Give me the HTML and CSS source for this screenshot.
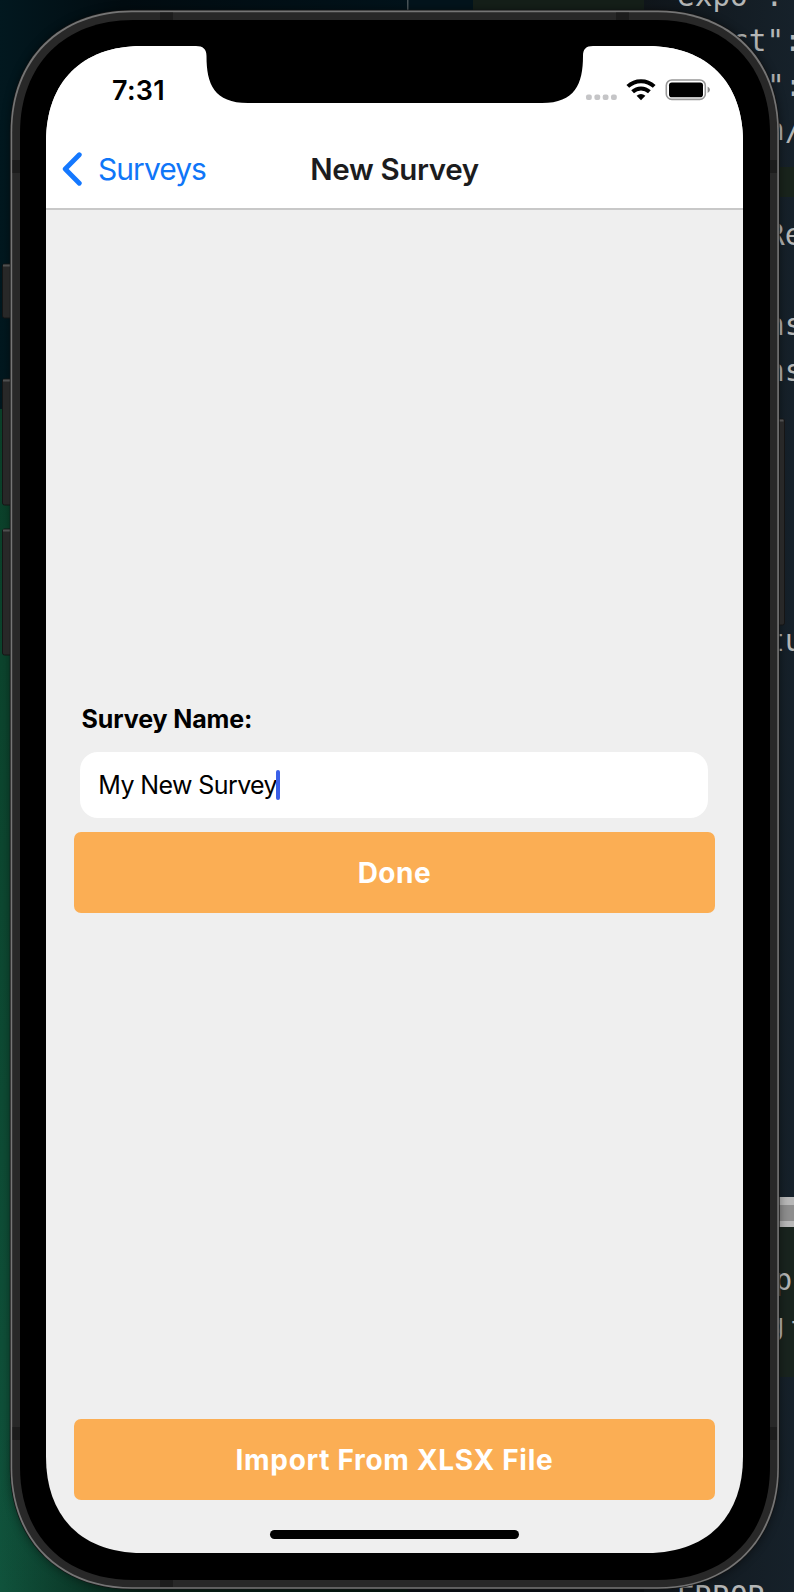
FILE: index.html
```html
<!DOCTYPE html>
<html lang="en">
<head>
<meta charset="utf-8">
<title>New Survey</title>
<link rel="stylesheet" href="styles.css">
</head>
<body>
<div class="desktop">
  <svg class="scene" width="794" height="1592" viewBox="0 0 794 1592" aria-hidden="true">
    <defs>
      <linearGradient id="sky" x1="0" x2="1" y1="0" y2="0"><stop offset="0" stop-color="#02181f"/><stop offset=".3" stop-color="#020c11"/><stop offset="1" stop-color="#02131b"/></linearGradient>
      <linearGradient id="grass" x1="0" x2="0" y1="0" y2="1"><stop offset="0" stop-color="#0b4029"/><stop offset="1" stop-color="#10533c"/></linearGradient>
      <linearGradient id="floor" x1="0" x2="1" y1="0" y2="0"><stop offset="0" stop-color="#04160f" stop-opacity="0"/><stop offset=".35" stop-color="#04160f" stop-opacity=".8"/><stop offset="1" stop-color="#04160f"/></linearGradient>
      <linearGradient id="editor" x1="0" x2="1" y1="0" y2="0"><stop offset="0" stop-color="#10161b"/><stop offset="1" stop-color="#16212a"/></linearGradient>
      <filter id="soft" x="-5%" y="-5%" width="110%" height="110%"><feGaussianBlur stdDeviation="5"/></filter>
    </defs>
    <rect width="410" height="409" fill="url(#sky)"/>
    <rect y="409" width="410" height="1183" fill="url(#grass)"/>
    <rect y="1440" width="410" height="152" fill="url(#floor)"/>
    <rect x="407" width="66" height="409" fill="#03141c"/>
    <rect x="407" width="1.5" height="20" fill="#4a5559"/>
    <rect x="408" y="1580" width="236" height="12" fill="#0a0f14"/>
    <rect x="473" width="171" height="20" fill="#151f19"/>
    <rect x="644" width="150" height="1592" fill="url(#editor)"/>
    <rect x="770" y="167" width="24" height="30" fill="#19241c"/>
    <rect x="770" y="1227" width="24" height="150" fill="#19241e"/>
    <rect x="770" y="1197" width="24" height="30" fill="#b8b8b8"/>
    <rect x="770" y="1205" width="24" height="16" fill="#8e8e8e"/>
    <g class="code">
      <text x="677" y="5.500">expo":</text>
      <text x="731" y="50.500">ct":</text>
      <text x="767" y="95.500">":</text>
      <text x="767" y="140">n/</text>
      <text x="767" y="245">Re</text>
      <text x="767" y="335">ns</text>
      <text x="767" y="380.500">ns</text>
      <text x="767" y="650.500">tu</text>
      <text x="774.500" y="1290">p</text>
      <text x="767" y="1335">g</text>
      <text x="790.500" y="1338">t</text>
      <text x="677" y="1607">ERROR</text>
    </g>
    <path id="shade" fill="#000" opacity=".4" filter="url(#soft)"/>
    <g class="keys">
      <rect x="2.5" y="264" width="14" height="54" rx="2"/>
      <rect x="2.5" y="379" width="14" height="126" rx="2"/>
      <rect x="2.5" y="529" width="14" height="126" rx="2"/>
      <rect x="772" y="419" width="12.500" height="206" rx="2"/>
    </g>
    <path class="key-edges" d="M3 265.500H12M3 380.500H12M3 530.500H12M778 420.500H783.500"/>
    <g id="frame"></g>
  </svg>

  <main class="screen">
    <header class="status">
      <span class="time">7:31</span>
      <svg class="indicators" width="130" height="28" viewBox="0 0 130 28">
        <g fill="#c5c5c7"><rect x="6" y="15.500" width="5.800" height="5.500" rx="2"/><rect x="14.400" y="15.500" width="5.800" height="5.500" rx="2"/><rect x="22.700" y="15.500" width="5.800" height="5.500" rx="2"/><rect x="31" y="15.500" width="5.800" height="5.500" rx="2"/></g>
        <g fill="none" stroke="#000" stroke-width="4"><path d="M47.800 7.400A19.300 19.300 0 0 1 74.200 7.400"/><path d="M52.600 12.700A12.400 12.400 0 0 1 69.400 12.700"/></g>
        <path d="M56.600 16.800Q61 13.300 65.400 16.800L61 21.200Z"/>
        <rect x="86.300" y="1" width="39" height="19.400" rx="5.500" fill="none" stroke="#989898" stroke-width="1.600"/>
        <rect x="89" y="3.400" width="34" height="14.800" rx="2.800"/>
        <path d="M127.600 7.500Q130 8.700 130 10.700T127.600 13.900Z" fill="#8c8c8c"/>
      </svg>
    </header>
    <nav class="nav">
      <a class="back"><svg width="20" height="34" viewBox="0 0 20 34"><path d="M17.300 2.700L3.200 17L17.300 31.300"/></svg><span class="back-label">Surveys</span></a>
      <h1 class="title">New Survey</h1>
    </nav>
    <section class="form">
      <label class="label">Survey Name:</label>
      <div class="field"><span class="value">My New Survey</span><i class="caret"></i></div>
      <button class="button">Done</button>
    </section>
    <footer class="footer">
      <button class="button import">Import From XLSX File</button>
      <div class="home"></div>
    </footer>
  </main>
</div>
<script src="frame.js"></script>
</body>
</html>
```
FILE: styles.css
```css
* { box-sizing: border-box; }
body { margin: 0; background: #02131b; font-family: Inter, "Liberation Sans", sans-serif; }
.desktop { position: relative; width: 794px; height: 1592px; overflow: hidden; padding: 46px 51px 39px 46px; }
.scene { position: absolute; left: 0; top: 0; }
.code { font: 29.400px "DejaVu Sans Mono", monospace; fill: #b4b6b6; }
.keys rect { fill: #282828; stroke: #151515; stroke-width: 1; }
.key-edges { stroke: #505050; stroke-width: 2; fill: none; }
.screen { position: relative; width: 697px; height: 1507px; background: #efefef; display: flex; flex-direction: column; }
.status { height: 82px; background: #fff; display: flex; justify-content: space-between; padding: 33px 33px 0 66px; }
.time { font-size: 27px; font-weight: 600; line-height: 24px; letter-spacing: 0.3px; white-space: nowrap; }
.nav { height: 82px; background: #fff; border-bottom: 2px solid #c8c8c8; display: grid; grid-template-columns: 1fr auto 1fr; align-items: center; padding-top: 2px; }
.back { display: flex; align-items: center; gap: 16px; padding-left: 16px; color: #0f76f8; font-size: 30px; }
.back svg { fill: none; stroke: #1478ff; stroke-width: 4.800; stroke-linecap: round; stroke-linejoin: round; }
.back-label { letter-spacing: -0.95px; }
.title { margin: 0; font-size: 29.500px; font-weight: 600; color: #1c1c1e; letter-spacing: -0.35px; white-space: nowrap; }
.form { padding: 491px 28.500px 0 28.300px; display: flex; flex-direction: column; }
.label { font-size: 25px; font-weight: 700; line-height: 36px; letter-spacing: -0.1px; padding-left: 7.200px; }
.field { height: 66px; margin: 15px 6.500px 14px 6px; border-radius: 18px; background: #fff; padding-left: 18px; display: flex; align-items: center; font-size: 25px; }
.value { letter-spacing: -0.6px; white-space: nowrap; }
.caret { width: 3.500px; height: 30px; margin-left: -1px; border-radius: 2px; background: #3a60e8; }
.button { display: flex; align-items: center; justify-content: center; width: 100%; height: 81px; border: 0; border-radius: 7px; background: #fbae54; color: #fff; font: 700 28px Inter, sans-serif; letter-spacing: 0.5px; padding: 0; }
.import { letter-spacing: 0.7px; }
.footer { margin-top: auto; padding: 0 28.500px 14px 28.300px; display: flex; flex-direction: column; align-items: center; gap: 30px; }
.home { width: 249px; height: 9px; border-radius: 5px; background: #000; }
.notch { position: absolute; left: 0; top: 0; }
```
FILE: frame.js
```js
// Rounded rectangle with smooth corners: e is the corner's extent, k how full it is.
function squircle(x, y, w, h, e, k) {
  const c = e * (1 - k), R = x + w, B = y + h;
  return `M${x + e} ${y}H${R - e}C${R - c} ${y} ${R} ${y + c} ${R} ${y + e}` +
    `V${B - e}C${R} ${B - c} ${R - c} ${B} ${R - e} ${B}` +
    `H${x + e}C${x + c} ${B} ${x} ${B - c} ${x} ${B - e}` +
    `V${y + e}C${x} ${y + c} ${x + c} ${y} ${x + e} ${y}Z`;
}
document.getElementById('shade').setAttribute('d', squircle(10, 10, 770, 1580, 121, 0.6));
document.getElementById('frame').innerHTML =
  `<path fill="#141414" d="${squircle(9.8, 9.8, 769.9, 1579.7, 122, 0.6)}"/>` +
  `<path fill="#757575" d="${squircle(10.6, 10.6, 768.3, 1578.2, 121, 0.6)}"/>` +
  `<path fill="#282828" d="${squircle(12.2, 12.2, 765.1, 1575, 120, 0.6)}"/>` +
  `<path fill="#1c1c1c" d="M160 12.500h13v8h-13zM616 12.500h13v8h-13zM160 1579h13v8h-13zM12.500 160h8v13h-8zM769 160h8v13h-8zM12.500 1427h8v13h-8zM769 1427h8v13h-8z"/>` +
  `<path fill="#000" d="${squircle(20, 20, 750, 1560, 113, 0.607)}"/>`;
const notch = 'M150 -1V0H150C157 0 160.500 3 160.500 10C160.500 38 168 57 202 57H496C529 57 537 38 537 10C537 3 540 0 547 0V-1Z';
document.querySelector('.screen').style.clipPath = `path("${squircle(0, 0, 697, 1507, 96, 0.625)}")`;
document.querySelector('.status').insertAdjacentHTML('beforeend',
  `<svg class="notch" width="697" height="60"><path d="${notch}"/></svg>`);
```
